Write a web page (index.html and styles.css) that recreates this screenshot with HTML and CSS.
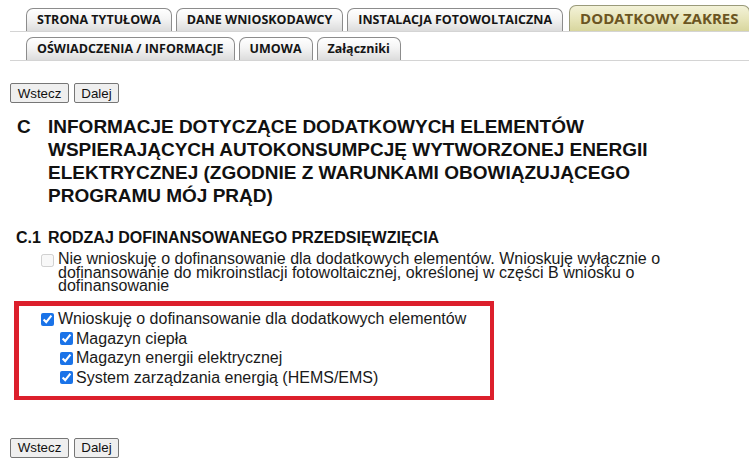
FILE: index.html
```html
<!DOCTYPE html>
<html lang="pl">
<head>
<meta charset="utf-8">
<title>Wniosek</title>
<link rel="stylesheet" href="styles.css">
</head>
<body>
<div class="page">
  <div class="tabs tabs-main">
    <div class="tab">STRONA TYTUŁOWA</div>
    <div class="tab">DANE WNIOSKODAWCY</div>
    <div class="tab">INSTALACJA FOTOWOLTAICZNA</div>
    <div class="tab tab-active">DODATKOWY ZAKRES</div>
    <div class="tab tab-cut"></div>
  </div>
  <div class="tabs tabs-second">
    <div class="tab">OŚWIADCZENIA / INFORMACJE</div>
    <div class="tab">UMOWA</div>
    <div class="tab">Załączniki</div>
  </div>

  <div class="nav nav-top">
    <button class="btn btn-back">Wstecz</button>
    <button class="btn btn-next">Dalej</button>
  </div>

  <div class="section-title">
    <span class="sec-num">C</span>
    <span class="sec-text">INFORMACJE DOTYCZĄCE DODATKOWYCH ELEMENTÓW WSPIERAJĄCYCH AUTOKONSUMPCJĘ WYTWORZONEJ ENERGII ELEKTRYCZNEJ (ZGODNIE Z WARUNKAMI OBOWIĄZUJĄCEGO PROGRAMU MÓJ PRĄD)</span>
  </div>

  <div class="sub-title">
    <span class="sub-num">C.1</span>
    <span class="sub-text">RODZAJ DOFINANSOWANEGO PRZEDSIĘWZIĘCIA</span>
  </div>

  <label class="opt opt-no">
    <input type="checkbox" disabled>
    <span class="opt-no-text">Nie wnioskuję o dofinansowanie dla dodatkowych elementów. Wnioskuję wyłącznie o dofinansowanie do mikroinstlacji fotowoltaicznej, określonej w części B wniosku o dofinansowanie</span>
  </label>

  <div class="highlight">
    <label class="opt opt-main">
      <input type="checkbox" checked>
      <span>Wnioskuję o dofinansowanie dla dodatkowych elementów</span>
    </label>
    <label class="opt opt-sub">
      <input type="checkbox" checked>
      <span>Magazyn ciepła</span>
    </label>
    <label class="opt opt-sub">
      <input type="checkbox" checked>
      <span>Magazyn energii elektrycznej</span>
    </label>
    <label class="opt opt-sub">
      <input type="checkbox" checked>
      <span>System zarządzania energią (HEMS/EMS)</span>
    </label>
  </div>

  <div class="nav nav-bottom">
    <button class="btn btn-back">Wstecz</button>
    <button class="btn btn-next">Dalej</button>
  </div>
</div>
</body>
</html>
```

FILE: styles.css
```css
* { box-sizing: border-box; }

html, body {
  margin: 0;
  padding: 0;
  background: #ffffff;
}

body {
  font-family: "Liberation Sans", Arial, sans-serif;
  color: #111111;
  overflow: hidden;
}

.page {
  padding: 0 0 0 10px;
}

.tabs {
  display: flex;
  align-items: flex-end;
  gap: 4px;
  padding-left: 16px;
  border-bottom: 1px solid #d4d4d4;
  overflow: hidden;
  white-space: nowrap;
}

.tabs-main {
  padding-top: 5px;
}

.tabs-second {
  margin-top: 5px;
}

.tab {
  height: 23px;
  padding: 0 10px;
  border: 1px solid #8c8c8c;
  border-bottom: none;
  border-radius: 7px 7px 0 0;
  background: linear-gradient(#ffffff 0%, #f4f4f4 45%, #dcdcdc 100%);
  font-family: "Open Sans", "Noto Sans", sans-serif;
  font-weight: 700;
  font-size: 12.5px;
  line-height: 22px;
  color: #151515;
  flex: none;
}

.tab-active {
  height: 26px;
  padding: 0 10px;
  margin-left: 2px;
  border-color: #9a9a7a;
  background: linear-gradient(#f3f2d8 0%, #e6e4b8 55%, #d8d69e 100%);
  font-size: 15px;
  line-height: 24px;
  color: #6b5522;
}

.tab-cut {
  width: 20px;
  margin-left: 0;
}

.nav {
  display: flex;
  gap: 5px;
}

.nav-top {
  margin-top: 22px;
}

.nav-bottom {
  margin-top: 38px;
}

.btn {
  height: 20px;
  padding: 0 6px;
  border: 1px solid #767676;
  border-radius: 2px;
  background: #efefef;
  font-family: "Liberation Sans", Arial, sans-serif;
  font-size: 13.33px;
  color: #111111;
}

.btn-back { width: 59px; }
.btn-next { width: 45px; }

.section-title {
  display: flex;
  margin-top: 12px;
  font-size: 19px;
  font-weight: 700;
  line-height: 23px;
  color: #111111;
}

.sec-num {
  width: 38px;
  padding-left: 7px;
  flex: none;
}

.sec-text {
  width: 650px;
}

.sub-title {
  display: flex;
  margin-top: 22px;
  font-size: 16px;
  font-weight: 700;
  line-height: 18px;
}

.sub-num {
  width: 38px;
  padding-left: 6px;
  flex: none;
}

.opt {
  display: flex;
  align-items: flex-start;
  font-size: 16px;
  color: #1a1a1a;
}

.opt input {
  margin: 0;
  width: 13px;
  height: 13px;
  flex: none;
  accent-color: #1a73e8;
}

.opt-no {
  margin-top: 5px;
  padding-left: 31px;
  gap: 4px;
  line-height: 13.5px;
}

.opt-no input {
  margin-top: 2px;
}

.opt-no-text {
  width: 640px;
}

.highlight {
  margin-top: 8px;
  margin-left: 4px;
  width: 480px;
  border: 4px solid #dc1f2c;
  border-top-width: 5px;
  border-left-width: 5px;
  padding: 4px 0 8px 0;
}

.opt-main, .opt-sub {
  align-items: center;
  height: 19.5px;
  gap: 4px;
}

.opt-main {
  padding-left: 22px;
}

.opt-sub {
  padding-left: 41px;
  gap: 3px;
}
```
